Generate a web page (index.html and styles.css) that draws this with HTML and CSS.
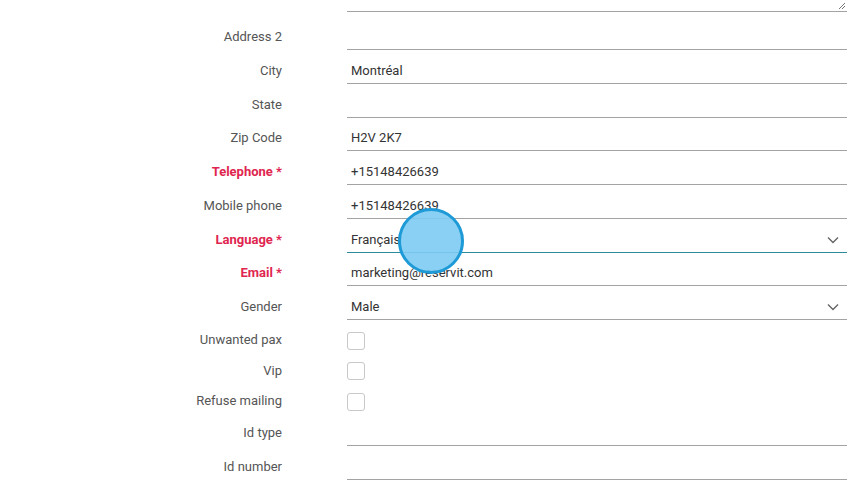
FILE: index.html
```html
<!DOCTYPE html>
<html>
<head>
<meta charset="utf-8">
<link rel="stylesheet" href="styles.css">
</head>
<body>
<form class="form">
  <div class="row row-textarea">
    <div class="label"></div>
    <div class="field field-textarea">
      <svg class="resize" width="8" height="8" viewBox="0 0 8 8"><path d="M7 1 L1 7 M7 4 L4 7" stroke="#777" stroke-width="1" fill="none"/></svg>
    </div>
  </div>
  <div class="row row-first">
    <div class="label">Address 2</div>
    <div class="field"></div>
  </div>
  <div class="row">
    <div class="label">City</div>
    <div class="field">Montréal</div>
  </div>
  <div class="row">
    <div class="label">State</div>
    <div class="field"></div>
  </div>
  <div class="row">
    <div class="label">Zip Code</div>
    <div class="field">H2V 2K7</div>
  </div>
  <div class="row">
    <div class="label required">Telephone *</div>
    <div class="field">+15148426639</div>
  </div>
  <div class="row">
    <div class="label">Mobile phone</div>
    <div class="field">+15148426639</div>
  </div>
  <div class="row">
    <div class="label required">Language *</div>
    <div class="field select focused">Français
      <svg class="chevron" width="12" height="8" viewBox="0 0 12 8"><path d="M1 1.5 L6 6.5 L11 1.5" stroke="#666" stroke-width="1.4" fill="none"/></svg>
    </div>
  </div>
  <div class="row">
    <div class="label required">Email *</div>
    <div class="field">marketing@reservit.com</div>
  </div>
  <div class="row">
    <div class="label">Gender</div>
    <div class="field select">Male
      <svg class="chevron" width="12" height="8" viewBox="0 0 12 8"><path d="M1 1.5 L6 6.5 L11 1.5" stroke="#666" stroke-width="1.4" fill="none"/></svg>
    </div>
  </div>
  <div class="checks">
    <div class="row-check">
      <div class="label">Unwanted pax</div>
      <div class="check-cell"><span class="checkbox"></span></div>
    </div>
    <div class="row-check">
      <div class="label">Vip</div>
      <div class="check-cell"><span class="checkbox"></span></div>
    </div>
    <div class="row-check">
      <div class="label">Refuse mailing</div>
      <div class="check-cell"><span class="checkbox"></span></div>
    </div>
  </div>
  <div class="row row-short">
    <div class="label">Id type</div>
    <div class="field"></div>
  </div>
  <div class="row">
    <div class="label">Id number</div>
    <div class="field"></div>
  </div>
</form>
<div class="touch"></div>
</body>
</html>
```

FILE: styles.css
```css
html, body {
  margin: 0;
  padding: 0;
  background: #ffffff;
  overflow: hidden;
}
body {
  font-family: Roboto, "Liberation Sans", sans-serif;
  font-size: 13px;
  color: #333;
  width: 860px;
  height: 481px;
  position: relative;
}
.form {
  display: flex;
  flex-direction: column;
}
.row {
  display: grid;
  grid-template-columns: 282px 500px;
  column-gap: 65px;
  align-items: end;
  height: 33.75px;
}
.row-textarea {
  height: 12px;
}
.row-first {
  height: 38px;
}
.row-short {
  height: 28.5px;
}
.label {
  text-align: right;
  color: #555;
  line-height: 26px;
  padding-bottom: 0;
  white-space: nowrap;
}
.label.required {
  color: #e0264f;
  font-weight: 700;
}
.field {
  height: 24px;
  padding-top: 2px;
  line-height: 24px;
  border-bottom: 1px solid #a3a3a3;
  padding-left: 4px;
  position: relative;
  color: #333;
}
.field-textarea {
  height: 11px;
  padding-top: 0;
}
.resize {
  position: absolute;
  right: 1px;
  bottom: 1px;
}
.select .chevron {
  position: absolute;
  right: 8px;
  top: 10px;
}
.focused {
  border-bottom-color: #2b8b9b;
}
.checks {
  padding-top: 6px;
  display: flex;
  flex-direction: column;
}
.row-check {
  display: grid;
  grid-template-columns: 282px 500px;
  column-gap: 65px;
  align-items: center;
  height: 30.5px;
}
.row-check .label {
  padding-bottom: 2px;
}
.check-cell {
  display: flex;
  align-items: center;
}
.checkbox {
  width: 16px;
  height: 16px;
  border: 1.5px solid #c8c8c8;
  border-radius: 3px;
  box-sizing: content-box;
  display: block;
  margin-top: -1px;
}
.touch {
  position: absolute;
  left: 398px;
  top: 208px;
  width: 60px;
  height: 60px;
  border-radius: 50%;
  border: 3px solid #1e9ad6;
  background: rgba(125, 203, 243, 0.9);
}
```
